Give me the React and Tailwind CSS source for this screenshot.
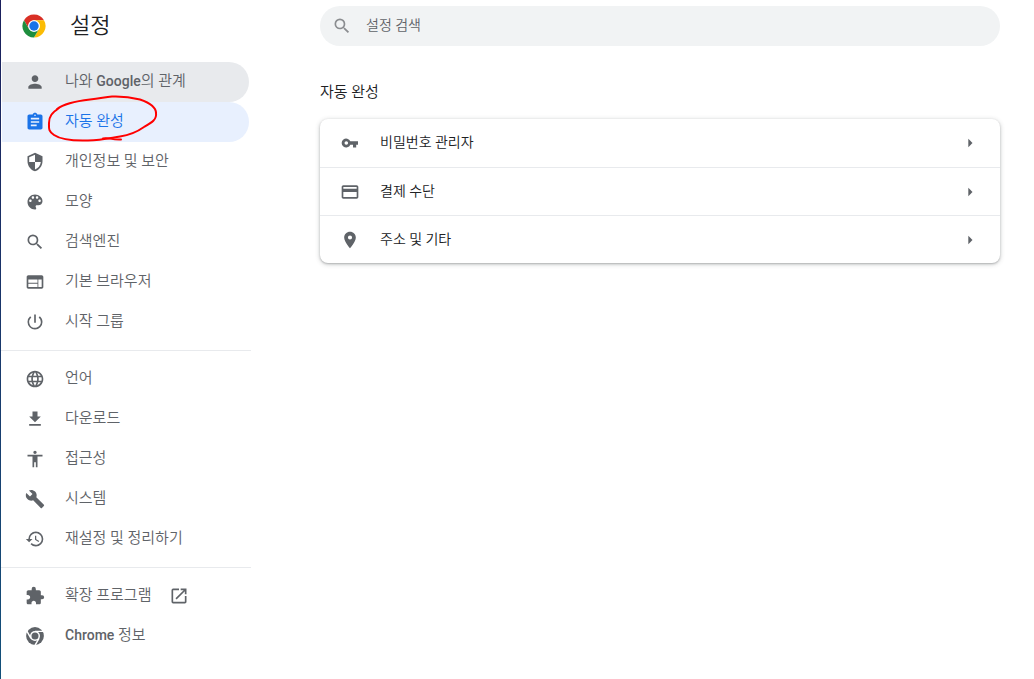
import {
  MdAccessibility,
  MdArrowRight,
  MdAssignment,
  MdBuild,
  MdCreditCard,
  MdExtension,
  MdFileDownload,
  MdLanguage,
  MdOpenInNew,
  MdPerson,
  MdPlace,
  MdPowerSettingsNew,
  MdRestore,
  MdSearch,
  MdSecurity,
  MdWeb,
} from "react-icons/md";

function PaletteIcon({ className }) {
  return (
    <svg viewBox="0 0 24 24" fill="currentColor" className={className} aria-hidden="true">
      <path d="M12 3c-4.970 0-9 4.030-9 9s4.030 9 9 9c.83 0 1.500-.67 1.500-1.500 0-.39-.15-.74-.39-1.010-.23-.26-.38-.61-.38-.99 0-.83.67-1.500 1.500-1.500H16c2.760 0 5-2.240 5-5 0-4.420-4.030-8-9-8zm-5.500 9c-.83 0-1.500-.67-1.500-1.500S5.670 9 6.500 9 8 9.670 8 10.500 7.330 12 6.500 12zm3-4C8.670 8 8 7.330 8 6.500S8.670 5 9.500 5s1.500.67 1.500 1.500S10.330 8 9.500 8zm5 0c-.83 0-1.500-.67-1.500-1.500S13.670 5 14.500 5s1.500.67 1.500 1.500S15.330 8 14.500 8zm3 4c-.83 0-1.500-.67-1.500-1.500S16.670 9 17.500 9s1.500.67 1.500 1.500-.67 1.500-1.500 1.500z" />
    </svg>
  );
}

function KeyIcon({ className }) {
  return (
    <svg viewBox="0 0 20 20" fill="currentColor" className={className} aria-hidden="true">
      <path
        fillRule="evenodd"
        d="M10.300 8.300A4.500 4.500 0 1 0 10.300 11.700H13v2.800h3.200v-2.800H18V8.300zM6.300 8.200a1.800 1.800 0 1 1 0 3.600a1.800 1.800 0 0 1 0-3.600z"
      />
    </svg>
  );
}

function ChromeMono({ className }) {
  return (
    <svg viewBox="-3 -3 54 54" className={className} aria-hidden="true">
      <circle cx="24" cy="24" r="24" fill="currentColor" />
      <path
        d="M24 11.500H48M13.200 30.250 1.200 9.500M34.800 30.250 22.800 51"
        stroke="#fff"
        strokeWidth="4"
      />
      <circle cx="24" cy="24" r="13.500" fill="#fff" />
      <circle cx="24" cy="24" r="9.500" fill="currentColor" />
    </svg>
  );
}

const MENU = [
  [
    {
      label: (
        <>
          나와 <Latin>Google</Latin>의 관계
        </>
      ),
      icon: MdPerson,
      state: "hover",
    },
    { label: "자동 완성", icon: MdAssignment, state: "active" },
    { label: "개인정보 및 보안", icon: MdSecurity },
    { label: "모양", icon: PaletteIcon },
    { label: "검색엔진", icon: MdSearch },
    { label: "기본 브라우저", icon: MdWeb },
    { label: "시작 그룹", icon: MdPowerSettingsNew },
  ],
  [
    { label: "언어", icon: MdLanguage },
    { label: "다운로드", icon: MdFileDownload },
    { label: "접근성", icon: MdAccessibility },
    { label: "시스템", icon: MdBuild },
    { label: "재설정 및 정리하기", icon: MdRestore },
  ],
  [
    { label: "확장 프로그램", icon: MdExtension, external: true },
    {
      label: (
        <>
          <Latin>Chrome</Latin> 정보
        </>
      ),
      icon: ChromeMono,
    },
  ],
];

const AUTOFILL = [
  { label: "비밀번호 관리자", icon: KeyIcon },
  { label: "결제 수단", icon: MdCreditCard },
  { label: "주소 및 기타", icon: MdPlace },
];

const ITEM_STATES = {
  hover: "bg-[#e8eaed] text-[#5f6368]",
  active: "bg-[#e8f0fe] text-[#1a73e8]",
  idle: "text-[#5f6368]",
};

function Latin({ children }) {
  return <span className="text-sm font-medium">{children}</span>;
}

function ChromeLogo() {
  return (
    <svg viewBox="-1 -1 50 50" className="size-6" aria-hidden="true">
      <path fill="#d93025" d="M3.200 12A24 24 0 0 1 44.800 12H24a12 12 0 0 0-10.400 18z" />
      <path fill="#fbbc04" d="M44.800 12A24 24 0 0 1 24 48l10.400-18A12 12 0 0 0 24 12z" />
      <path fill="#1e8e3e" d="M24 48A24 24 0 0 1 3.200 12l10.400 18a12 12 0 0 0 20.800 0z" />
      <circle cx="24" cy="24" r="12" fill="#fff" />
      <circle cx="24" cy="24" r="9.800" fill="#1a73e8" />
    </svg>
  );
}

function PenCircle() {
  return (
    <svg
      viewBox="0 0 112 50"
      className="pointer-events-none absolute -top-2 left-11 z-10 h-[50px] w-28"
      fill="none"
      stroke="#f00"
      strokeWidth="2"
      strokeLinecap="round"
      aria-hidden="true"
    >
      <path d="M11 15C19 9 31 7 44 5.500C54 5 58 3 66 2.500C78 2 88 4 94 5.500C104 9 110 14 110 19C111 26 105 29 98 33C91 38 84 41 74 42.500C64 44 56 46 42 46.500C26 47 14 45 8 41C2 37 3 34 3 29C3 22 6 19 13 14" />
      <path d="M57 44.500C62 43 65 46 75 45.500" />
    </svg>
  );
}

function MenuItem({ label, icon: Icon, state = "idle", external }) {
  return (
    <a
      href="#"
      className={`relative ml-px mr-0.5 flex h-10 items-center rounded-r-full pl-[23px] text-[15px] font-[350] ${ITEM_STATES[state]}`}
    >
      <Icon className="mr-5 size-5 shrink-0" />
      <span className="pb-0.5 leading-5">{label}</span>
      {external && <MdOpenInNew className="ml-[18px] size-5 shrink-0" />}
      {state === "active" && <PenCircle />}
    </a>
  );
}

export default function App() {
  return (
    <div className="flex min-h-screen bg-white font-['Roboto','Noto_Sans_CJK_KR',sans-serif] text-[#202124]">
      <div className="w-px bg-linear-to-b from-[#1a1f5c] to-[#12507a]" />

      <aside className="w-[250px] shrink-0">
        <header className="flex h-[62px] items-center gap-6 pb-2.5 pl-[21px]">
          <ChromeLogo />
          <h1 className="text-[22px] font-[350] leading-7">설정</h1>
        </header>
        <nav>
          {MENU.map((group, i) => (
            <div
              key={i}
              className={i > 0 ? "mt-2 border-t border-[#e8eaed] pt-2" : ""}
            >
              {group.map((item, j) => (
                <MenuItem key={j} {...item} />
              ))}
            </div>
          ))}
        </nav>
      </aside>

      <main className="flex-1 pl-[69px] pr-[34px] pt-1.5">
        <label className="flex h-10 items-center gap-3.5 rounded-full bg-[#f1f3f4] pl-3">
          <MdSearch className="size-5 shrink-0 text-[#8b8d90]" />
          <input
            type="text"
            aria-label="설정 검색"
            placeholder="설정 검색"
            className="w-full bg-transparent pb-0.5 text-sm font-[350] outline-none placeholder:text-[#5f6368]"
          />
        </label>

        <h2 className="mt-9 text-[15px] font-[350] leading-5">자동 완성</h2>

        <div className="mt-[17px] rounded-lg bg-white shadow-[0_1px_2px_rgba(60,64,67,0.3),0_1px_4px_1px_rgba(60,64,67,0.18)]">
          {AUTOFILL.map(({ label, icon: Icon }) => (
            <button
              key={label}
              type="button"
              className="flex h-12 w-full items-center gap-5 border-t border-[#e8eaed] px-5 text-left text-sm font-[350] first:border-t-0"
            >
              <Icon className="size-5 shrink-0 text-[#5f6368]" />
              <span className="flex-1 pb-0.5">{label}</span>
              <MdArrowRight className="size-5 shrink-0 text-[#5f6368]" />
            </button>
          ))}
        </div>
      </main>
    </div>
  );
}
